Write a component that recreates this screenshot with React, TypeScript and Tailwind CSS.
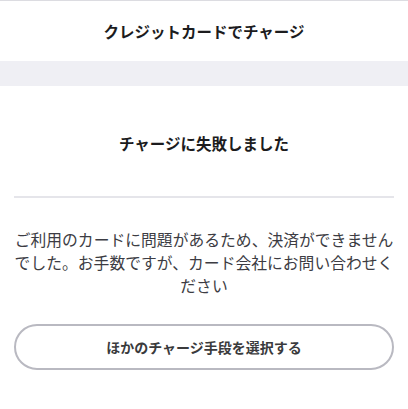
import React from "react";

export default function App() {
  return (
    <div
      className="w-[408px] h-[409px] bg-white overflow-hidden"
      style={{ fontFamily: '"Noto Sans CJK JP", "Noto Sans", sans-serif' }}
    >
      <div className="h-[61px] border-t border-[#dcdce1] flex items-center justify-center">
        <h1 className="text-[15.5px] font-bold text-[#1c1c1e] leading-6">クレジットカードでチャージ</h1>
      </div>
      <div className="h-[25px] bg-[#efeff4]" />
      <div className="pt-[45px] flex justify-center">
        <h2 className="text-[15.5px] font-bold text-[#1c1c1e] leading-6">チャージに失敗しました</h2>
      </div>
      <div className="mx-[14px] mt-[41px] h-[2px] bg-[#e5e5ea]" />
      <p className="mx-[13px] mt-[30px] text-center text-[15.8px] leading-[23px] text-[#3c3c43]">
        ご利用のカードに問題があるため、決済ができませんでした。お手数ですが、カード会社にお問い合わせください
      </p>
      <div className="px-[14px] mt-[27px]">
        <button className="w-full h-[46px] rounded-full border-2 border-[#b9b9c1] bg-white flex items-center justify-center text-[14px] font-semibold text-[#3a3a3c]">
          ほかのチャージ手段を選択する
        </button>
      </div>
    </div>
  );
}
